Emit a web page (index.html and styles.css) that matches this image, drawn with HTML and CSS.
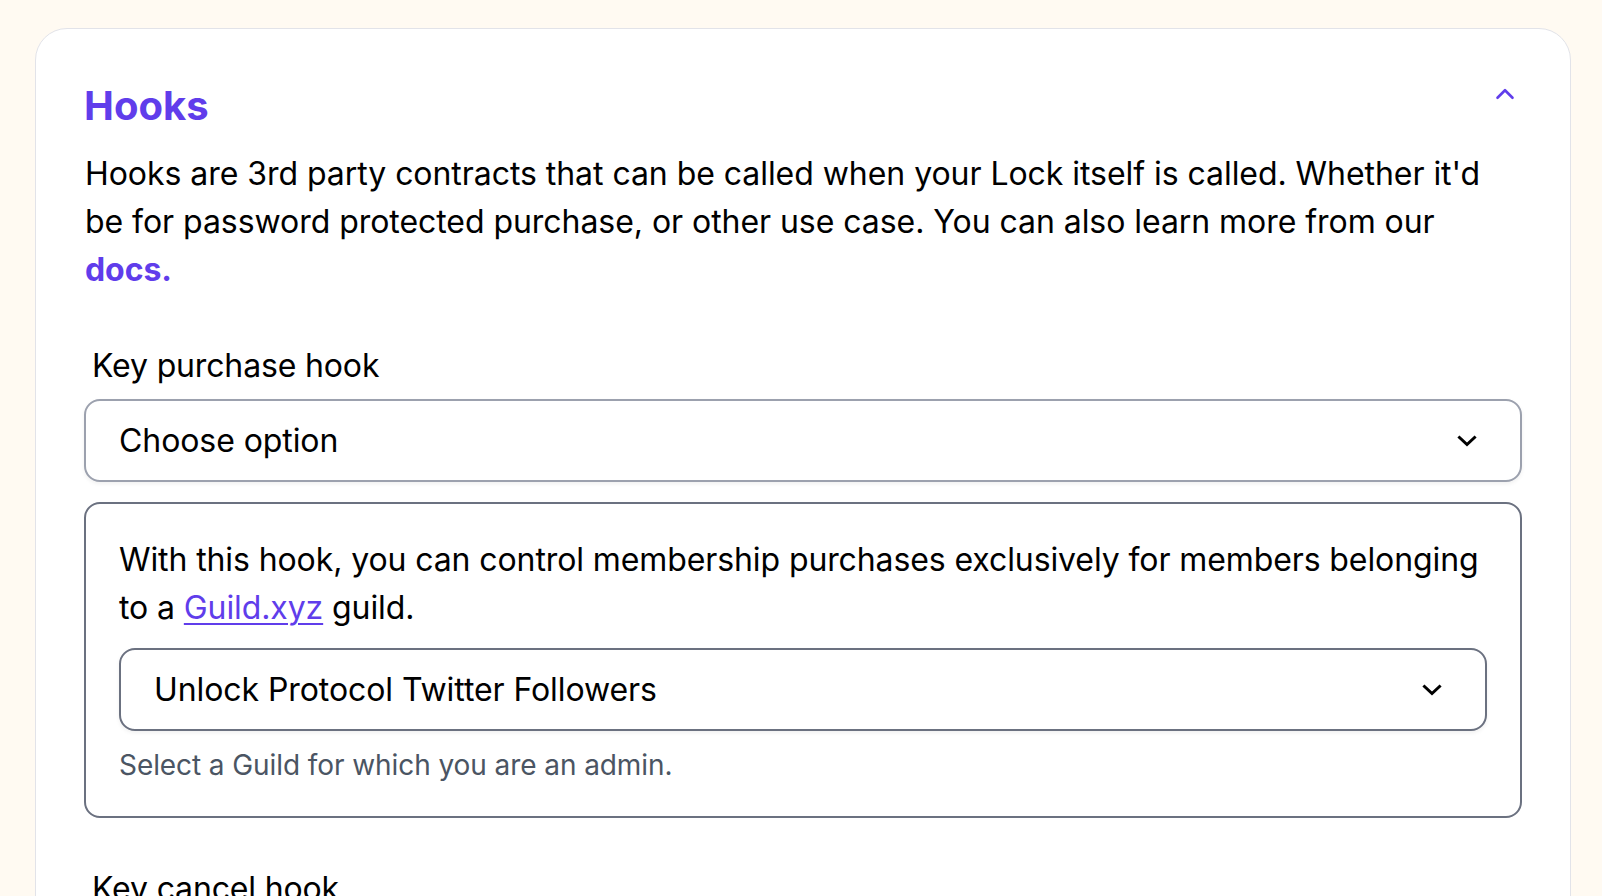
FILE: index.html
```html
<!DOCTYPE html>
<html lang="en">
<head>
<meta charset="utf-8">
<title>Hooks</title>
<link rel="stylesheet" href="styles.css">
</head>
<body>
<div class="page">
  <section class="card">
    <header class="card-header">
      <h2 class="title">Hooks</h2>
      <button class="toggle" aria-label="Collapse">
        <svg width="24" height="24" viewBox="0 0 24 24" fill="none" stroke="currentColor" stroke-width="2.6" stroke-linecap="round" stroke-linejoin="round"><path d="M4.5 15.75l7.5-7.5 7.5 7.5"/></svg>
      </button>
    </header>
    <p class="desc">Hooks are 3rd party contracts that can be called when your Lock itself is called. Whether it'd be for password protected purchase, or other use case. You can also learn more from our <a class="docs" href="#">docs.</a></p>

    <div class="field">
      <label class="label">Key purchase hook</label>
      <div class="select select-light">
        <span>Choose option</span>
        <svg class="chev" width="20" height="12" viewBox="0 0 20 12" fill="none" stroke="currentColor" stroke-width="3" stroke-linecap="square"><path d="M2.5 2.5l7.5 7 7.5-7"/></svg>
      </div>
      <div class="hook-box">
        <p class="hook-text">With this hook, you can control membership purchases exclusively for members belonging to a <a class="link" href="#">Guild.xyz</a> guild.</p>
        <div class="select select-dark">
          <span>Unlock Protocol Twitter Followers</span>
          <svg class="chev" width="20" height="12" viewBox="0 0 20 12" fill="none" stroke="currentColor" stroke-width="3" stroke-linecap="square"><path d="M2.5 2.5l7.5 7 7.5-7"/></svg>
        </div>
        <p class="help">Select a Guild for which you are an admin.</p>
      </div>
    </div>

    <div class="field field-next">
      <label class="label">Key cancel hook</label>
    </div>
  </section>
</div>
</body>
</html>
```

FILE: styles.css
```css
* { box-sizing: border-box; }
html, body { margin: 0; padding: 0; }
body {
  background: #fffaf2;
  font-family: Inter, "Noto Sans", sans-serif;
  color: #000;
  height: 896px;
  overflow: hidden;
}
.page {
  padding: 28px 31px 0 35px;
}
.card {
  background: #fff;
  border: 1px solid #e2e3e9;
  border-radius: 32px;
  padding: 49px 48px 60px 48px;
}
.card-header {
  display: flex;
  justify-content: space-between;
  align-items: flex-start;
}
.title {
  margin: 0;
  font-size: 40px;
  line-height: 56px;
  font-weight: 700;
  color: #603deb;
}
.toggle {
  background: none;
  border: 0;
  padding: 0;
  margin: 4px 5px 0 0;
  color: #603deb;
  display: flex;
}
.desc {
  margin: 16px 0 0 1px;
  font-size: 32px;
  line-height: 48px;
  letter-spacing: -0.05px;
}
.docs {
  color: #603deb;
  font-weight: 700;
  text-decoration: none;
}
.field { margin-top: 48px; display: flex; flex-direction: column; }
.label {
  padding-left: 8px;
  font-size: 32px;
  line-height: 48px;
  letter-spacing: -0.15px;
}
.select {
  display: flex;
  align-items: center;
  justify-content: space-between;
  height: 83px;
  border-radius: 16px;
  padding: 0 43px 0 33px;
  font-size: 32px;
  line-height: 48px;
  letter-spacing: -0.08px;
  background: #fff;
  box-shadow: 0 2px 4px rgba(0, 0, 0, 0.06);
}
.select-light { margin-top: 9px; border: 2px solid #9ca1ae; }
.select-dark { margin-top: 16px; border: 2px solid #6b7180; }
.chev { color: #000; flex-shrink: 0; }
.hook-box {
  margin-top: 20px;
  border: 2px solid #6b7180;
  border-radius: 16px;
  padding: 32px 33px 31px;
}
.hook-text {
  margin: 0;
  font-size: 32px;
  line-height: 48px;
  letter-spacing: -0.1px;
}
.link {
  color: #603deb;
  text-decoration: underline;
  text-underline-offset: 4px;
  text-decoration-thickness: 2px;
}
.help {
  margin: 14px 0 0;
  font-size: 28px;
  line-height: 40px;
  letter-spacing: -0.08px;
  color: #4b5563;
}
.field-next { margin-top: 47px; }
```
